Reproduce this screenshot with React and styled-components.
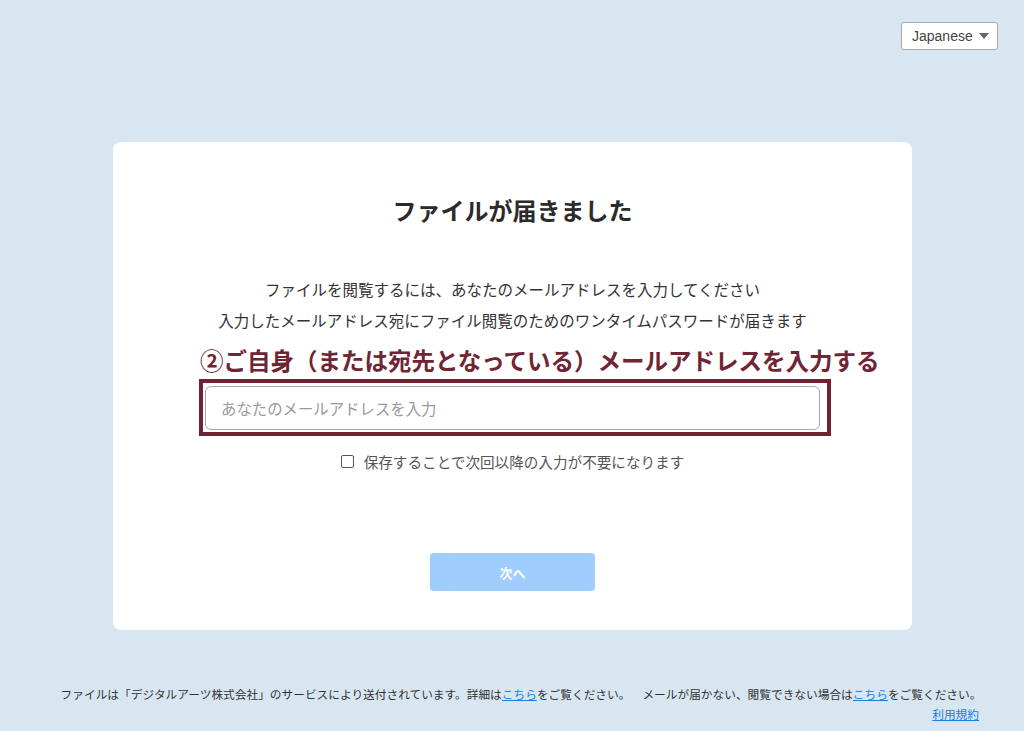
import React from "react";
import styled, { createGlobalStyle } from "styled-components";

const Global = createGlobalStyle`
  html, body { margin: 0; padding: 0; }
  body {
    background: #d8e6f1;
    font-family: "Noto Sans CJK JP", "Noto Sans", sans-serif;
    color: #333;
  }
`;

const Page = styled.div`
  width: 1024px;
  height: 731px;
  display: flex;
  flex-direction: column;
  box-sizing: border-box;
`;

const TopBar = styled.div`
  display: flex;
  justify-content: flex-end;
  padding: 22px 26px 0 0;
  height: 93px;
  box-sizing: border-box;
`;

const LangSelect = styled.div`
  width: 97px;
  height: 28px;
  box-sizing: border-box;
  background: #fff;
  border: 1px solid #a9a9a9;
  border-radius: 3px;
  display: flex;
  align-items: center;
  justify-content: space-between;
  padding: 0 8px 0 10px;
  font-family: "Liberation Sans", Arial, sans-serif;
  font-size: 14px;
  color: #444;
`;

const Caret = styled.span`
  width: 0;
  height: 0;
  border-left: 5px solid transparent;
  border-right: 5px solid transparent;
  border-top: 6px solid #666;
`;

const Card = styled.main`
  margin: 49px 0 0 113px;
  width: 799px;
  height: 488px;
  background: #fff;
  border-radius: 8px;
  display: flex;
  flex-direction: column;
  align-items: center;
  box-sizing: border-box;
  padding-top: 50px;
`;

const Title = styled.h1`
  margin: 0;
  font-size: 24px;
  font-weight: 700;
  line-height: 36px;
  color: #2b2b2b;
`;

const Lead = styled.p`
  margin: ${(p) => p.$top}px 0 0;
  font-size: 15.5px;
  line-height: 22px;
  color: #333;
`;

const Note = styled.div`
  margin: 14px 0 0 87px;
  align-self: flex-start;
  font-size: 23.5px;
  font-weight: 700;
  line-height: 30px;
  color: #6f2533;
  white-space: nowrap;
`;

const Highlight = styled.div`
  margin: 4px 0 0 86px;
  align-self: flex-start;
  width: 632px;
  height: 57px;
  box-sizing: border-box;
  border: 4px solid #6e2332;
  padding: 3px 7px 2px 2px;
`;

const Input = styled.div`
  height: 44px;
  box-sizing: border-box;
  border: 1px solid #a8a8a8;
  border-radius: 6px;
  display: flex;
  align-items: center;
  padding-left: 15px;
  font-size: 15.4px;
  color: #9a9a9a;
`;

const CheckRow = styled.label`
  margin-top: 15px;
  display: flex;
  align-items: center;
  gap: 10px;
  font-size: 14.6px;
  color: #555;
`;

const Box = styled.span`
  width: 11px;
  height: 11px;
  border: 1px solid #555;
  border-radius: 2px;
  background: #fff;
`;

const NextButton = styled.button`
  margin-top: 81px;
  width: 165px;
  height: 38px;
  border: none;
  border-radius: 4px;
  background: #9fcdfd;
  color: #fff;
  font-family: inherit;
  font-size: 13px;
  font-weight: 700;
`;

const Footer = styled.footer`
  margin-top: 54px;
  display: flex;
  flex-direction: column;
  align-items: center;
  font-size: 11.7px;
  color: #333;
  line-height: 20px;
`;

const FootLine = styled.div`
  display: flex;
  gap: 12px;
  margin-left: 18px;
`;

const Link = styled.a`
  color: #1a7fe0;
  text-decoration: underline;
`;

const Terms = styled.div`
  align-self: flex-end;
  margin-right: 45px;
`;

export default function App() {
  return (
    <>
      <Global />
      <Page>
        <TopBar>
          <LangSelect>
            Japanese
            <Caret />
          </LangSelect>
        </TopBar>
        <Card>
          <Title>ファイルが届きました</Title>
          <Lead $top={50}>ファイルを閲覧するには、あなたのメールアドレスを入力してください</Lead>
          <Lead $top={9}>入力したメールアドレス宛にファイル閲覧のためのワンタイムパスワードが届きます</Lead>
          <Note>②ご自身（または宛先となっている）メールアドレスを入力する</Note>
          <Highlight>
            <Input>あなたのメールアドレスを入力</Input>
          </Highlight>
          <CheckRow>
            <Box />
            保存することで次回以降の入力が不要になります
          </CheckRow>
          <NextButton>次へ</NextButton>
        </Card>
        <Footer>
          <FootLine>
            <span>
              ファイルは「デジタルアーツ株式会社」のサービスにより送付されています。詳細は
              <Link>こちら</Link>をご覧ください。
            </span>
            <span>
              メールが届かない、閲覧できない場合は<Link>こちら</Link>をご覧ください。
            </span>
          </FootLine>
          <Terms>
            <Link>利用規約</Link>
          </Terms>
        </Footer>
      </Page>
    </>
  );
}
